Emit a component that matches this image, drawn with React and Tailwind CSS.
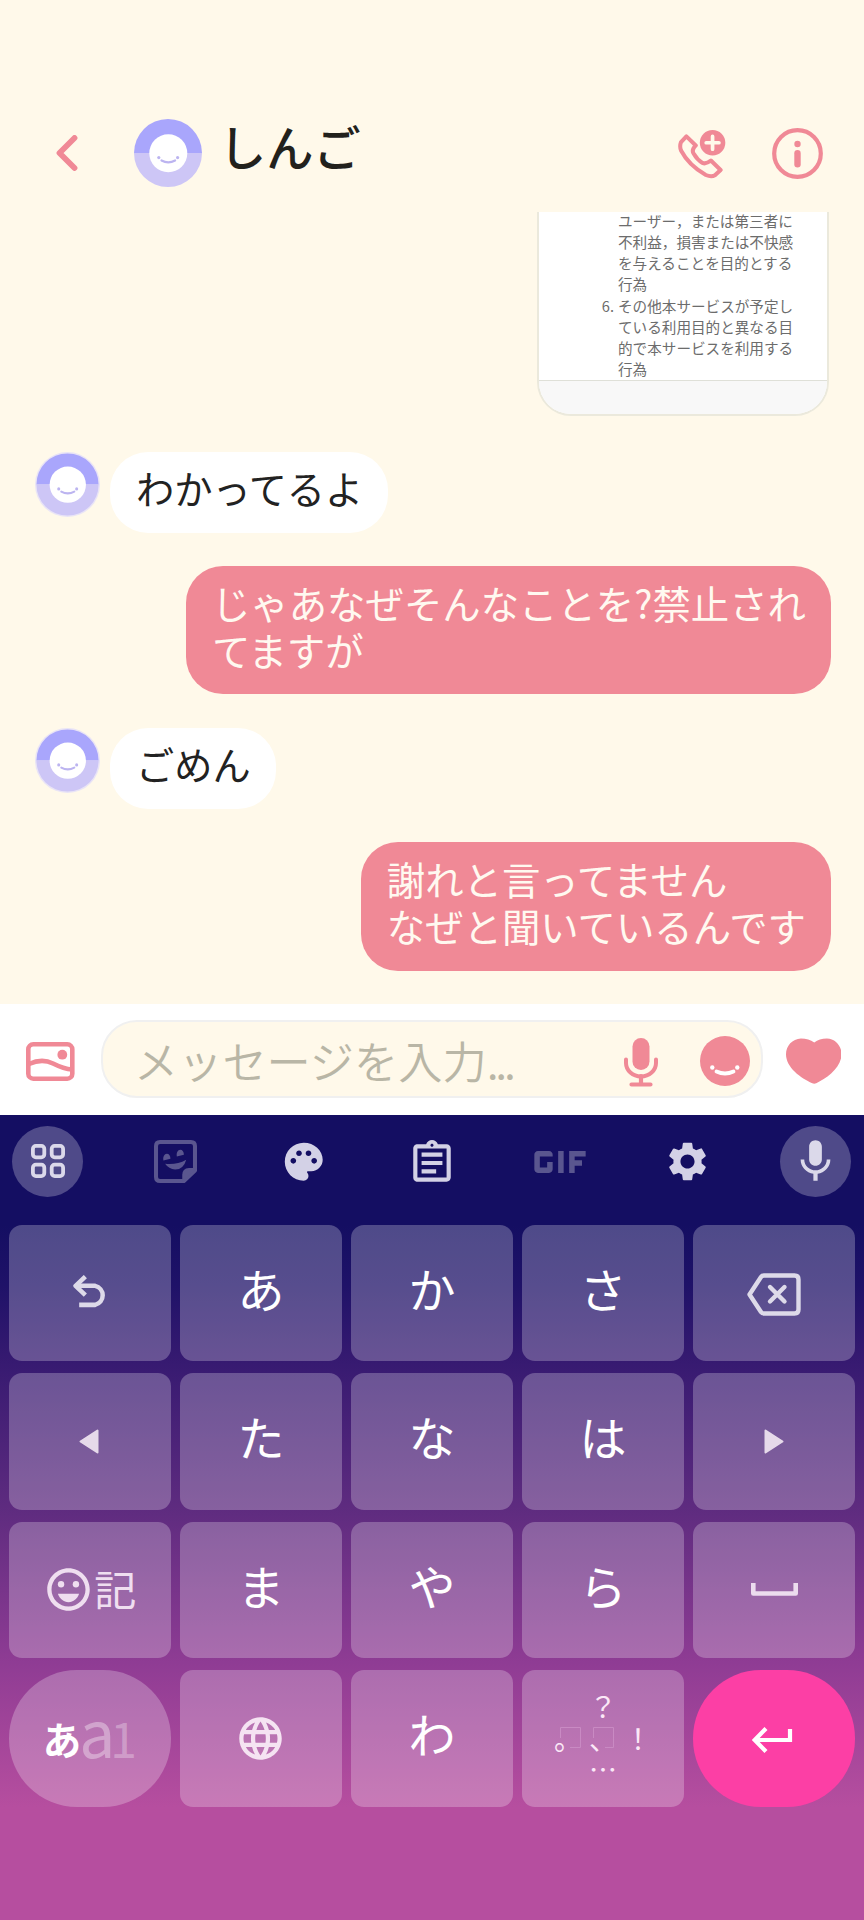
import React from "react";
import {
  MdPalette,
  MdSettings,
  MdLanguage,
  MdOutlineAssignment,
  MdOutlineEmojiEmotions,
  MdMic,
  MdGif,
} from "react-icons/md";

const PINK = "#f08996";

function Avatar({ size, ring }) {
  return (
    <svg width={size} height={size} viewBox="0 0 68 68" className="shrink-0">
      {ring && <circle cx="34" cy="34" r="34" fill="#e9e4f6" />}
      <path d={ring ? "M1.500 34a32.500 32.500 0 0 1 65 0z" : "M0 34a34 34 0 0 1 68 0z"} fill="#a9a6fc" />
      <path d={ring ? "M1.500 34a32.500 32.500 0 0 0 65 0z" : "M0 34a34 34 0 0 0 68 0z"} fill="#cdc6f6" />
      <circle cx="34.3" cy="34.2" r="19" fill="#fff" />
      <circle cx="24.8" cy="38.6" r="1.6" fill="#bcb4f0" />
      <circle cx="43.6" cy="38.6" r="1.6" fill="#bcb4f0" />
      <path d="M27.500 41.500q6.800 3.600 13.600 0" fill="none" stroke="#bcb4f0" strokeWidth="2.200" strokeLinecap="round" />
    </svg>
  );
}

function Header() {
  return (
    <header className="flex h-[212px] shrink-0 items-start pl-[56px] pr-[41px] pt-[119px]">
      <svg width="22" height="36" viewBox="0 0 22 36" className="mt-[16px]">
        <path d="M18.500 3L3.500 18l15 15" fill="none" stroke={PINK} strokeWidth="5.800" strokeLinecap="round" strokeLinejoin="round" />
      </svg>
      <div className="ml-[56px]">
        <Avatar size={68} />
      </div>
      <h1 className="ml-[17px] mt-[-3px] text-[47.200px] font-medium leading-[60px] text-[#22211c]">しんご</h1>
      <svg width="48" height="50" viewBox="473 116 143 149" className="ml-auto mt-[9.500px]">
        <path
          d="M498 138L526 165Q512 179 520 190Q530 208 546 217Q556 222 571 210L600 238L583 254Q572 260 556 253Q505 224 482 180Q477 168 482 155Z"
          fill="none"
          stroke={PINK}
          strokeWidth="12"
          strokeLinejoin="round"
        />
        <circle cx="576" cy="157" r="38" fill={PINK} />
        <path d="M576 138v38M557 157h38" stroke="#fff9ea" strokeWidth="11" strokeLinecap="round" />
      </svg>
      <svg width="51" height="51" viewBox="0 0 51 51" className="ml-[46px] mt-[9px]">
        <circle cx="25.500" cy="25.500" r="23.300" fill="none" stroke={PINK} strokeWidth="4.200" />
        <circle cx="25.500" cy="16" r="3.200" fill={PINK} />
        <rect x="22.300" y="22" width="6.400" height="17.500" rx="3.200" fill={PINK} />
      </svg>
    </header>
  );
}

const terms = [
  "ユーザー，または第三者に",
  "不利益，損害または不快感",
  "を与えることを目的とする",
  "行為",
  "その他本サービスが予定し",
  "ている利用目的と異なる目",
  "的で本サービスを利用する",
  "行為",
];

function SharedImage() {
  return (
    <div className="ml-auto mr-[35px] flex h-[203.500px] w-[292px] flex-col overflow-hidden rounded-b-[34px] border-2 border-t-0 border-[#ebe9dc] bg-white">
      <div className="h-[168px] text-[14.600px] leading-[21.150px] text-[#6c6c6c]">
        {terms.map((line, i) => (
          <div key={i} className={i === 0 ? "mt-[-2px] flex whitespace-nowrap" : "flex whitespace-nowrap"}>
            <span className="w-[79px] shrink-0 pr-[4px] text-right">{i === 4 ? "6." : ""}</span>
            <span>{line}</span>
          </div>
        ))}
      </div>
      <div className="flex-1 border-t border-[#dfe0d8] bg-[#f8f8f8]" />
    </div>
  );
}

function Received({ children }) {
  return (
    <div className="flex items-start pl-[35px]">
      <Avatar size={65} ring />
      <div className="ml-[10px] h-[80.500px] rounded-[38px] bg-white pl-[26px] pr-[25px] pt-[12px] text-[38.200px] leading-[47px] text-[#222]">
        {children}
      </div>
    </div>
  );
}

function Sent({ lines }) {
  return (
    <div className="ml-auto mr-[33px] h-[128.300px] rounded-[37px] bg-[#f08996] pl-[26px] pr-[25px] pt-[12.500px] text-[38.400px] leading-[47px] text-[#fff9f0]">
      {lines.map((l) => (
        <div key={l} className="whitespace-nowrap">{l}</div>
      ))}
    </div>
  );
}

function InputBar() {
  return (
    <div className="flex h-[111.500px] shrink-0 items-start bg-white pl-[26px] pt-[16px]">
      <svg width="48.500" height="39" viewBox="0 0 48.500 39" className="mt-[22px]" fill="none">
        <rect x="2.300" y="2.300" width="44" height="34.400" rx="5" stroke={PINK} strokeWidth="4.600" />
        <path d="M3 22Q16 16 27 21.500T46 27.500" stroke={PINK} strokeWidth="4.600" />
        <circle cx="36.300" cy="12.700" r="4.900" fill={PINK} />
      </svg>
      <div className="ml-[26.500px] flex h-[78.500px] w-[662px] items-start rounded-[36px] border-2 border-[#f0f0f0] bg-[#fff9ea] pl-[31px] pr-[11px]">
        <div className="mt-[8px] whitespace-nowrap text-[44.200px] font-[350] leading-[60px] text-[#b9b6a6]">
          メッセージを入力<span className="tracking-[-3.200px]">...</span>
        </div>
        <svg width="34" height="49" viewBox="0 0 34 49" className="ml-auto mt-[16px]" fill="none">
          <rect x="8.500" y="0" width="17" height="32" rx="8.500" fill={PINK} />
          <path d="M2 21.500v3.500a15 13.500 0 0 0 30 0v-3.500" stroke={PINK} strokeWidth="4" strokeLinecap="round" />
          <path d="M17 38v8M7.500 46.500h19" stroke={PINK} strokeWidth="4.200" strokeLinecap="round" />
        </svg>
        <svg width="50" height="50" viewBox="0 0 50 50" className="ml-[42px] mt-[14.500px]" fill="none">
          <circle cx="25" cy="25" r="25" fill={PINK} />
          <circle cx="12.300" cy="31.500" r="2.200" fill="#fff" />
          <circle cx="37.300" cy="31.500" r="2.200" fill="#fff" />
          <path d="M16.500 35.500q8.500 4 17 0" stroke="#fff" strokeWidth="3.800" strokeLinecap="round" />
        </svg>
      </div>
      <svg width="55.500" height="46" viewBox="1061 145 167 138" className="ml-[22.500px] mt-[18px]">
        <path
          d="M1146 158C1157 150 1168 146 1184 146C1210 147 1228 168 1228 194C1228 234 1184 266 1152 281Q1146 284 1140 281C1106 266 1061 234 1061 194C1061 168 1080 147 1106 146C1122 146 1135 150 1146 158Z"
          fill={PINK}
        />
      </svg>
    </div>
  );
}

function GridIcon() {
  return (
    <svg width="34" height="34" viewBox="0 0 34 34" fill="none" stroke="#dbd9ea" strokeWidth="3.800">
      <rect x="1.900" y="1.900" width="11.400" height="11.400" rx="3" />
      <rect x="20.700" y="1.900" width="11.400" height="11.400" rx="3" />
      <rect x="1.900" y="20.700" width="11.400" height="11.400" rx="3" />
      <rect x="20.700" y="20.700" width="11.400" height="11.400" rx="3" />
    </svg>
  );
}

function StickerIcon() {
  return (
    <svg width="43" height="43" viewBox="463 450 128 128" fill="none">
      <path d="M481 456H573Q585 456 585 468V541L552 572H481Q469 572 469 560V468Q469 456 481 456Z" stroke="#5a568f" strokeWidth="12" strokeLinejoin="round" />
      <path d="M590 533H567Q547 534 547 554V577Z" fill="#5a568f" />
      <path d="M491 511C489 499 494 492 501 491C508 491 512 497 512 506ZM531 499C529 487 534 480 541 479C548 479 552 485 552 494Z" fill="#5a568f" />
      <path d="M496 521Q530 525 559 509Q551 538 526 538Q507 537 496 521Z" fill="#5a568f" />
    </svg>
  );
}

function Tool({ round, children }) {
  return (
    <div className={round ? "flex size-[71px] items-center justify-center rounded-full bg-white/25" : "flex size-[71px] items-center justify-center"}>
      {children}
    </div>
  );
}

function Toolbar() {
  return (
    <div className="flex h-[109.500px] items-start justify-between pl-[12px] pr-[13px] pt-[10.500px] text-[#d3d1e6]">
      <Tool round><GridIcon /></Tool>
      <Tool><StickerIcon /></Tool>
      <Tool><MdPalette size={45.5} className="mt-[1px]" /></Tool>
      <Tool><MdOutlineAssignment size={50} className="mt-[3px]" /></Tool>
      <Tool><MdGif size={88} className="mt-[1px] shrink-0 text-[#5a568f]" /></Tool>
      <Tool><MdSettings size={47} /></Tool>
      <Tool round><MdMic size={51} className="text-[#dbd9ea]" /></Tool>
    </div>
  );
}

function Key({ shape = "rounded-[13px]", bg = "bg-white/25", children }) {
  return (
    <div className={`flex h-[136.500px] items-center justify-center overflow-hidden ${shape} ${bg}`}>
      {children}
    </div>
  );
}

function Kana({ children }) {
  return (
    <Key>
      <span className="mt-[-10px] text-[47px] leading-[60px] text-white">{children}</span>
    </Key>
  );
}

function Undo() {
  return (
    <svg width="35" height="33" viewBox="0 0 34 32" fill="none" stroke="#dddae9" strokeWidth="4.400" className="ml-[1px] mt-[-2px]">
      <path d="M12 1.500L2.500 10.500L12 19.500" strokeLinejoin="round" />
      <path d="M3 10.500H21.500A9.500 9.500 0 0 1 21.500 29H6" />
    </svg>
  );
}

function Backspace() {
  return (
    <svg width="54" height="43" viewBox="0 0 54 43" fill="none" stroke="#dddae9" strokeWidth="4.400" strokeLinejoin="round" strokeLinecap="round" className="ml-[-1px] mt-[3px]">
      <path d="M17 2.500H47.500Q51.500 2.500 51.500 6.500V36.500Q51.500 40.500 47.500 40.500H17Q15 40.500 14 39L2.500 21.500L14 4Q15 2.500 17 2.500Z" />
      <path d="M23 14L37.500 28.500M37.500 14L23 28.500" />
    </svg>
  );
}

function Triangle({ flip }) {
  return (
    <svg width="20" height="25" viewBox="0 0 20 25" className={flip ? "rotate-180" : "ml-[-2px]"}>
      <path d="M18.500 1.500V23.500L1.500 12.500Z" fill="#e6daea" stroke="#e6daea" strokeWidth="2" strokeLinejoin="round" />
    </svg>
  );
}

function Punctuation() {
  return (
    <div className="mt-[-2px] flex w-[104px] flex-col text-[28px] leading-[32px] text-[#fbe8f7]">
      <div className="text-center">？</div>
      <div className="flex items-center justify-between">
        <span className="relative flex w-[34px] justify-start">
          <svg width="21" height="21" viewBox="0 0 21 21" className="absolute left-[9px] top-[5px]" fill="none" stroke="#c98ac3" strokeWidth="1">
            <path d="M.5 11V.5h20v20H10" />
          </svg>
          <span className="ml-[3px]">。</span>
        </span>
        <span className="relative flex w-[34px] justify-start">
          <svg width="21" height="21" viewBox="0 0 21 21" className="absolute left-[7px] top-[5px]" fill="none" stroke="#c98ac3" strokeWidth="1">
            <path d="M.5 11V.5h20v20H12" />
          </svg>
          <span className="ml-[3px]">、</span>
        </span>
        <span className="w-[34px] text-center">！</span>
      </div>
      <div className="text-center leading-[30px]">…</div>
    </div>
  );
}

function Keyboard() {
  return (
    <div className="flex-1 bg-[linear-gradient(180deg,#140e62_0px,#140e62_110px,#1f1268_170px,#371a71_248px,#602c80_400px,#8f3c94_548px,#b64e9f_692px,#b64e9f_805px)]">
      <Toolbar />
      <div className="grid grid-cols-5 gap-x-[9.500px] gap-y-[12px] px-[9px]">
        <Key><Undo /></Key>
        <Kana>あ</Kana>
        <Kana>か</Kana>
        <Kana>さ</Kana>
        <Key><Backspace /></Key>

        <Key><Triangle /></Key>
        <Kana>た</Kana>
        <Kana>な</Kana>
        <Kana>は</Kana>
        <Key><Triangle flip /></Key>

        <Key>
          <MdOutlineEmojiEmotions size={51} color="#efdef0" />
          <span className="mt-[-4px] text-[42px] leading-[60px] text-[#efdef0]">記</span>
        </Key>
        <Kana>ま</Kana>
        <Kana>や</Kana>
        <Kana>ら</Kana>
        <Key>
          <svg width="47" height="13" viewBox="0 0 47 13" fill="none" stroke="#ecdcee" strokeWidth="4.600">
            <path d="M2.300 0V10.500H44.700V0" strokeLinejoin="round" />
          </svg>
        </Key>

        <Key shape="rounded-[68px]">
          <div className="mt-[-17px] flex h-[60px] items-baseline leading-[60px]">
            <span className="relative top-[-3px] text-[38.500px] font-bold text-white">あ</span>
            <span className="ml-[-2px] text-[64px] font-normal text-white/35">a</span>
            <span className="ml-[-5px] text-[48px] font-normal text-white/30">1</span>
          </div>
        </Key>
        <Key><MdLanguage size={51} color="#f5e3f2" /></Key>
        <Kana>わ</Kana>
        <Key><Punctuation /></Key>
        <Key shape="rounded-[68px]" bg="bg-[#fc3fa5]">
          <svg width="41" height="26" viewBox="0 0 41 26" fill="none" stroke="#fff" strokeWidth="4.200" className="ml-[-3px] mt-[4px]">
            <path d="M14 1.500L2.800 13L14 24.500" />
            <path d="M3 13H38V2" />
          </svg>
        </Key>
      </div>
    </div>
  );
}

export default function App() {
  return (
    <div
      lang="ja"
      className="flex h-[1920px] w-[864px] flex-col overflow-hidden bg-[#fff9ea] font-['Noto_Sans_CJK_JP','Noto_Sans',sans-serif]"
    >
      <Header />
      <main className="flex h-[791.500px] shrink-0 flex-col">
        <SharedImage />
        <div className="mt-[36.500px] flex flex-col gap-[33.700px]">
          <Received>わかってるよ</Received>
          <Sent lines={["じゃあなぜそんなことを?禁止され", "てますが"]} />
          <Received>ごめん</Received>
          <Sent lines={["謝れと言ってません", "なぜと聞いているんです"]} />
        </div>
      </main>
      <InputBar />
      <Keyboard />
    </div>
  );
}
